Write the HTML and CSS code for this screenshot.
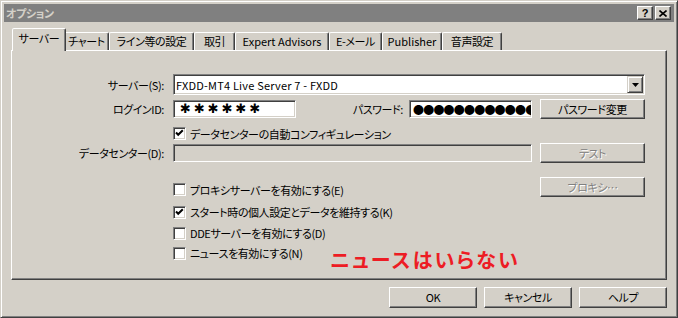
FILE: index.html
```html
<!DOCTYPE html>
<html lang="ja">
<head>
    <meta charset="UTF-8">
    <title>オプション</title>
    <link rel="stylesheet" href="styles.css">
</head>
<body>
    <div class="window">
        <div class="titlebar">
            <span class="title">オプション</span>
            <div class="title-buttons">
                <span class="tbtn help">?</span>
                <span class="tbtn">
                    <svg width="8" height="7" viewBox="0 0 8 7"><path d="M0.5 0.5 L7.5 6.5 M7.5 0.5 L0.5 6.5" stroke="#000" stroke-width="1.6" fill="none"/></svg>
                </span>
            </div>
        </div>
        <div class="body">
            <div class="tabs">
                <div class="tab active t-server">サーバー</div>
                <div class="tab t-chart">チャート</div>
                <div class="tab t-line">ライン等の設定</div>
                <div class="tab t-trade">取引</div>
                <div class="tab t-ea">Expert Advisors</div>
                <div class="tab t-mail">E-メール</div>
                <div class="tab t-pub">Publisher</div>
                <div class="tab t-sound">音声設定</div>
            </div>
            <div class="panel">
                <div class="row r-server">
                    <span class="label">サーバー(S):</span>
                    <div class="combo">
                        <span class="combo-text">FXDD-MT4 Live Server 7 - FXDD</span>
                        <span class="combo-btn">
                            <svg width="7" height="4" viewBox="0 0 7 4"><path d="M0 0 H7 L3.5 4 Z" fill="#000"/></svg>
                        </span>
                    </div>
                </div>
                <div class="row r-login">
                    <span class="label">ログインID:</span>
                    <div class="field id-field">✱✱✱✱✱✱</div>
                    <span class="pw-label">パスワード:</span>
                    <div class="field pw-field">●●●●●●●●●●●●●</div>
                    <div class="btn side">パスワード変更</div>
                </div>
                <div class="row r-auto">
                    <div class="check">
                        <span class="box checked"><svg width="9" height="9" viewBox="0 0 9 9"><path d="M1 3.5 L3.2 5.8 L7.8 1.2" stroke="#000" stroke-width="2" fill="none"/></svg></span>
                        <span>データセンターの自動コンフィギュレーション</span>
                    </div>
                </div>
                <div class="row r-dc">
                    <span class="label">データセンター(D):</span>
                    <div class="field dc-field disabled"></div>
                    <div class="btn side disabled">テスト</div>
                </div>
                <div class="row r-proxy">
                    <div class="check">
                        <span class="box"></span>
                        <span>プロキシサーバーを有効にする(E)</span>
                    </div>
                    <div class="btn side disabled push">プロキシ…</div>
                </div>
                <div class="row r-start">
                    <div class="check">
                        <span class="box checked"><svg width="9" height="9" viewBox="0 0 9 9"><path d="M1 3.5 L3.2 5.8 L7.8 1.2" stroke="#000" stroke-width="2" fill="none"/></svg></span>
                        <span>スタート時の個人設定とデータを維持する(K)</span>
                    </div>
                </div>
                <div class="row r-next">
                    <div class="check">
                        <span class="box"></span>
                        <span>DDEサーバーを有効にする(D)</span>
                    </div>
                </div>
                <div class="row r-next">
                    <div class="check">
                        <span class="box"></span>
                        <span>ニュースを有効にする(N)</span>
                    </div>
                </div>
                <div class="note">ニュースはいらない</div>
            </div>
            <div class="actions">
                <div class="btn">OK</div>
                <div class="btn">キャンセル</div>
                <div class="btn">ヘルプ</div>
            </div>
        </div>
    </div>
</body>
</html>
```

FILE: styles.css
```css
body {
    margin: 0;
    background: #d4d0c8;
    font-family: "Noto Sans CJK JP", sans-serif;
    font-size: 11px;
    letter-spacing: -0.4px;
    font-feature-settings: "palt";
    color: #000;
}
.window {
    width: 678px;
    height: 318px;
    box-sizing: border-box;
    border: 1px solid;
    border-color: #d4d0c8 #404040 #404040 #d4d0c8;
    box-shadow: inset 1px 1px #fff, inset -1px -1px #808080;
    padding: 3px;
    display: flex;
    flex-direction: column;
}
.titlebar {
    height: 18px;
    background: #808080;
    display: flex;
    align-items: center;
    justify-content: space-between;
    padding: 0 3px 0 2px;
}
.title {
    color: #d4d0c8;
    font-weight: bold;
    line-height: 18px;
}
.title-buttons {
    display: flex;
    gap: 2px;
}
.tbtn {
    width: 16px;
    height: 14px;
    box-sizing: border-box;
    background: #d4d0c8;
    border: 1px solid;
    border-color: #fff #404040 #404040 #fff;
    box-shadow: inset -1px -1px #808080;
    display: flex;
    align-items: center;
    justify-content: center;
}
.tbtn.help {
    font-family: "Liberation Sans", sans-serif;
    font-weight: bold;
    font-size: 11px;
    line-height: 12px;
}
.body {
    flex: 1;
    padding: 6px 7px 0;
    display: flex;
    flex-direction: column;
}
.tabs {
    display: flex;
    align-items: flex-end;
    height: 22px;
    padding-left: 3px;
}
.tab {
    height: 18px;
    box-sizing: border-box;
    border: 1px solid;
    border-bottom: 0;
    border-color: #fff #404040 transparent #fff;
    box-shadow: inset -1px 0 #808080;
    border-radius: 2px 2px 0 0;
    line-height: 17px;
    text-align: center;
    white-space: nowrap;
}
.tab.active {
    height: 23px;
    margin: 0 -2px -1px;
    position: relative;
    z-index: 1;
    background: #d4d0c8;
    line-height: 19px;
}
.t-server { width: 54px; }
.t-chart { width: 45px; }
.t-line { width: 85px; }
.t-trade { width: 41px; }
.t-ea { width: 94px; letter-spacing: 0; }
.t-mail { width: 53px; }
.t-pub { width: 60px; letter-spacing: 0; }
.t-sound { width: 60px; }
.panel {
    height: 230px;
    box-sizing: border-box;
    border: 1px solid;
    border-color: #fff #404040 #404040 #fff;
    box-shadow: inset -1px -1px #808080;
    position: relative;
    padding: 23px 21px 0 0;
}
.row {
    display: flex;
    align-items: center;
    line-height: 14px;
    white-space: nowrap;
}
.label {
    width: 152px;
    margin-right: 9px;
    text-align: right;
}
.r-server {
    height: 21px;
}
.r-login {
    height: 20px;
    margin-top: 4px;
}
.r-auto {
    height: 19px;
    margin-top: 5px;
}
.r-dc {
    height: 20px;
}
.r-proxy {
    height: 20px;
    margin-top: 14px;
    align-items: flex-end;
}
.r-start {
    height: 20px;
    margin-top: 5px;
}
.r-next {
    height: 20px;
    margin-top: 1px;
}
.r-next + .r-next {
    margin-top: 0;
}
.combo, .field, .box {
    box-sizing: border-box;
    border: 1px solid;
    border-color: #808080 #fff #fff #808080;
    box-shadow: inset 1px 1px #404040, inset -1px -1px #d4d0c8;
    background: #fff;
}
.combo {
    width: 472px;
    height: 21px;
    display: flex;
    align-items: center;
    justify-content: space-between;
    padding: 1px 1px 1px 2px;
}
.combo-text {
    letter-spacing: 0.2px;
}
.combo-btn {
    width: 16px;
    height: 17px;
    box-sizing: border-box;
    border: 1px solid;
    border-color: #d4d0c8 #404040 #404040 #d4d0c8;
    box-shadow: inset 1px 1px #fff, inset -1px -1px #808080;
    background: #d4d0c8;
    display: flex;
    align-items: center;
    justify-content: center;
}
.field {
    height: 18px;
    overflow: hidden;
}
.id-field {
    width: 123px;
    padding-left: 6px;
    font-family: "DejaVu Sans", sans-serif;
    font-weight: bold;
    font-size: 13px;
    line-height: 16px;
    letter-spacing: 3px;
}
.pw-label {
    width: 107px;
    margin-right: 6px;
    text-align: right;
}
.pw-field {
    width: 123px;
    padding-left: 3px;
    font-size: 11px;
    line-height: 16px;
    letter-spacing: -0.8px;
}
.dc-field {
    width: 359px;
}
.field.disabled {
    background: #d4d0c8;
}
.btn {
    width: 88px;
    height: 21px;
    box-sizing: border-box;
    border: 1px solid;
    border-color: #fff #404040 #404040 #fff;
    box-shadow: inset -1px -1px #808080;
    text-align: center;
    line-height: 19px;
}
.btn.side {
    width: 105px;
    height: 20px;
    margin-left: 8px;
    line-height: 18px;
}
.btn.disabled {
    color: #808080;
    text-shadow: 1px 1px #fff;
}
.btn.push {
    margin-left: auto;
}
.check {
    display: flex;
    align-items: center;
    height: 15px;
    margin-left: 161px;
}
.box {
    width: 13px;
    height: 13px;
    margin-right: 4px;
    display: flex;
    align-items: center;
    justify-content: center;
}
.note {
    position: absolute;
    left: 318px;
    top: 199px;
    color: #ed1c24;
    font-size: 20px;
    font-weight: bold;
    line-height: 20px;
    letter-spacing: 2.2px;
}
.actions {
    display: flex;
    justify-content: flex-end;
    gap: 7px;
    margin-top: 7px;
}
```
